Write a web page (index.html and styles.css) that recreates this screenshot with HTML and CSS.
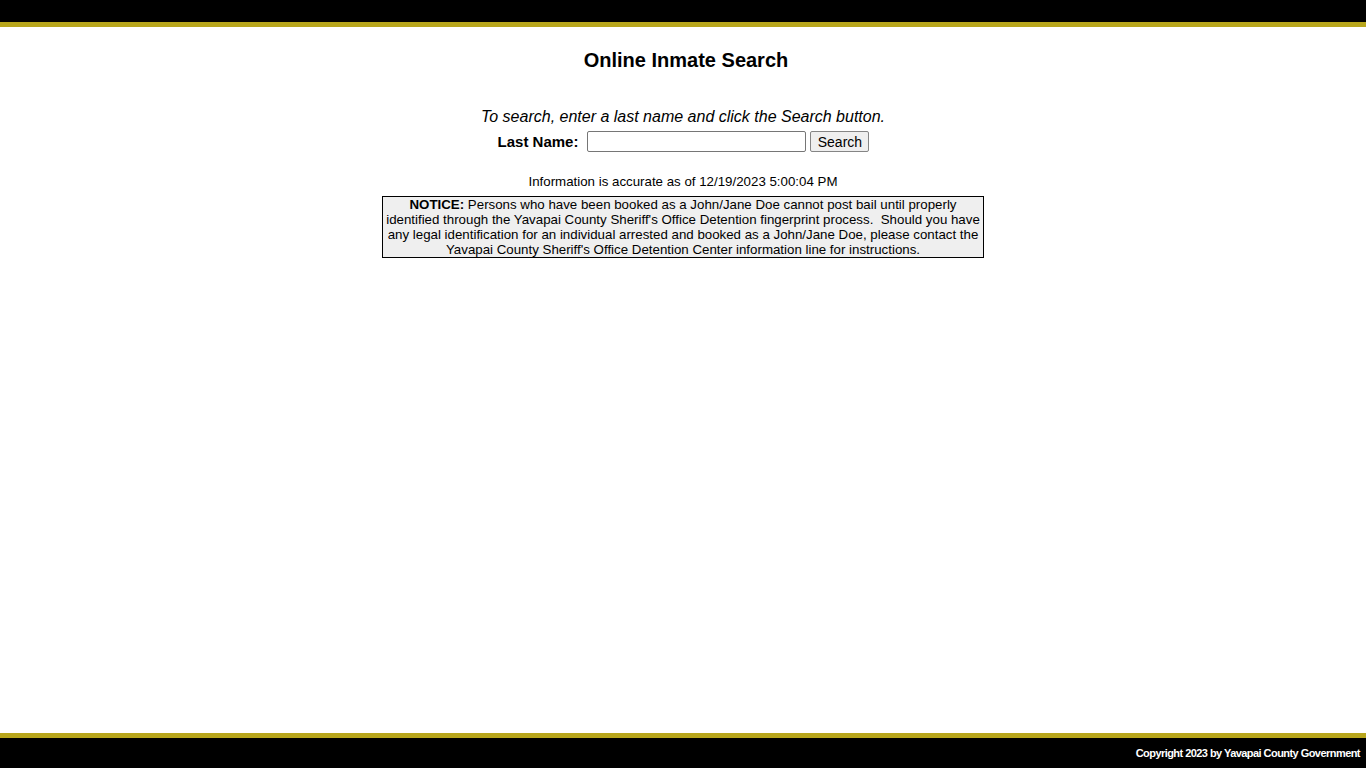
FILE: index.html
```html
<!DOCTYPE html>
<html>
<head>
<meta charset="utf-8">
<title>Online Inmate Search</title>
<link rel="stylesheet" href="styles.css">
</head>
<body>
<div class="page">
  <header class="topbar"></header>
  <main class="content">
    <h1 class="title">Online Inmate Search</h1>
    <p class="instructions">To search, enter a last name and click the Search button.</p>
    <form class="search-row">
      <label class="label" for="ln">Last Name:</label>
      <input class="name-input" id="ln" type="text">
      <button class="search-btn" type="button">Search</button>
    </form>
    <p class="accuracy">Information is accurate as of 12/19/2023 5:00:04 PM</p>
    <div class="notice"><b>NOTICE:</b> Persons who have been booked as a John/Jane Doe cannot post bail until properly identified through the Yavapai County Sheriff's Office Detention fingerprint process.&nbsp; Should you have any legal identification for an individual arrested and booked as a John/Jane Doe, please contact the Yavapai County Sheriff's Office Detention Center information line for instructions.</div>
  </main>
  <footer class="footer">
    <span class="copyright">Copyright 2023 by Yavapai County Government</span>
  </footer>
</div>
</body>
</html>
```
FILE: styles.css
```css
html, body {
  margin: 0;
  padding: 0;
  height: 100%;
  background: #fff;
  font-family: "Liberation Sans", Arial, sans-serif;
  color: #000;
}
.page {
  display: flex;
  flex-direction: column;
  height: 100vh;
}
.topbar {
  height: 22px;
  background: #000;
  border-bottom: 5px solid #b8a61c;
  flex: none;
}
.content {
  flex: 1;
  display: flex;
  flex-direction: column;
  align-items: center;
}
.title {
  font-size: 20px;
  font-weight: bold;
  margin: 21px 0 0;
  padding-left: 6px;
  line-height: 24px;
}
.instructions {
  font-size: 16px;
  font-style: italic;
  margin: 35px 0 0;
  line-height: 20px;
}
.search-row {
  display: flex;
  align-items: center;
  margin: 4px 0 0;
  padding-left: 1px;
}
.label {
  font-size: 15px;
  font-weight: bold;
  margin-right: 9px;
}
.name-input {
  width: 219px;
  height: 21px;
  box-sizing: border-box;
  border: 1px solid #767676;
  border-radius: 2px;
  margin: 0 4px 0 0;
  padding: 1px 2px;
}
.search-btn {
  height: 21px;
  width: 59px;
  box-sizing: border-box;
  font-family: "Liberation Sans", Arial, sans-serif;
  font-size: 14px;
  padding: 0;
  border: 1px solid #858585;
  border-radius: 2px;
  background: #efefef;
  color: #000;
}
.accuracy {
  font-size: 13.3px;
  margin: 22px 0 0;
  line-height: 16px;
}
.notice {
  width: 600px;
  margin: 6px 0 0;
  border: 1px solid #000;
  background: #efefef;
  font-size: 13.3px;
  line-height: 15px;
  text-align: center;
  padding: 0;
}
.footer {
  flex: none;
  height: 30px;
  background: #000;
  border-top: 5px solid #b8a61c;
  display: flex;
  align-items: center;
  justify-content: flex-end;
  padding-right: 6px;
}
.copyright {
  color: #fff;
  font-size: 11px;
  font-weight: bold;
  letter-spacing: -0.55px;
}
```
